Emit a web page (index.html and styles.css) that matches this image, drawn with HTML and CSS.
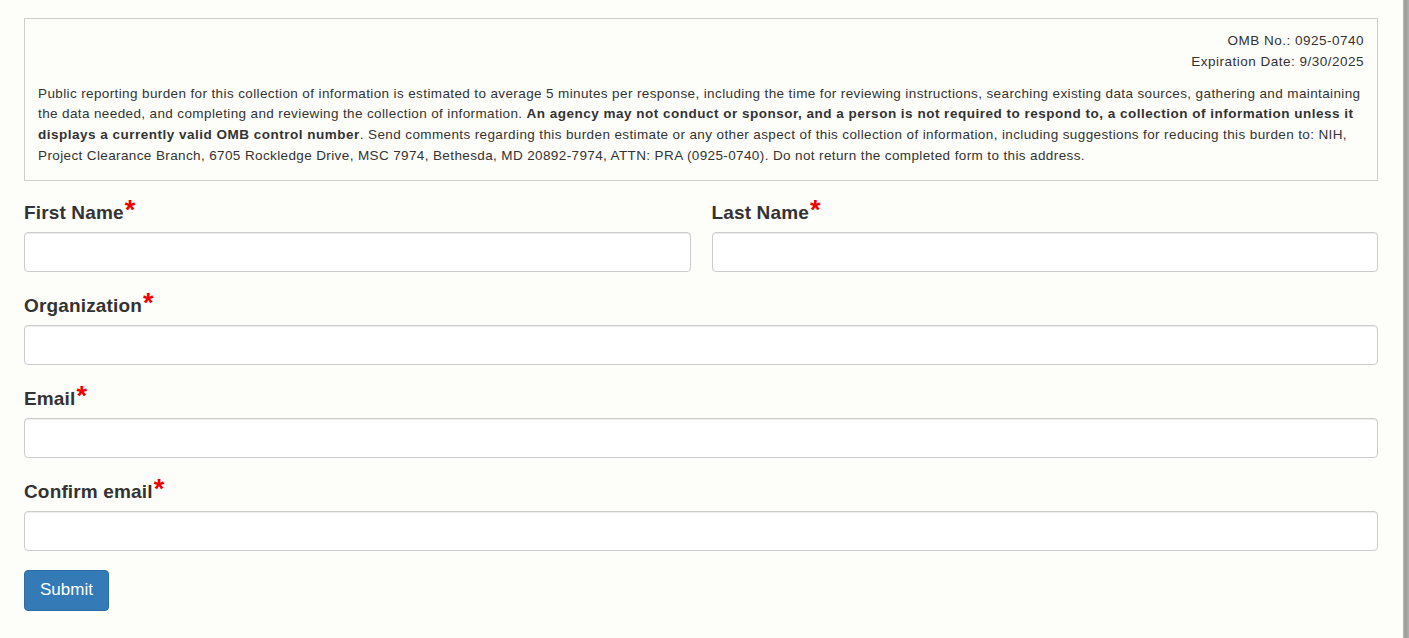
FILE: index.html
```html
<!DOCTYPE html>
<html lang="en">
<head>
<meta charset="utf-8">
<title>Registration</title>
<link rel="stylesheet" href="styles.css">
</head>
<body>
<div class="page">
  <main class="main">
    <p class="intro">Please register</p>
    <section class="burden">
      <div class="omb">
        <div>OMB No.: 0925-0740</div>
        <div>Expiration Date: 9/30/2025</div>
      </div>
      <p class="burden-text">Public reporting burden for this collection of information is estimated to average 5 minutes per response, including the time for reviewing instructions, searching existing data sources, gathering and maintaining the data needed, and completing and reviewing the collection of information. <strong>An agency may not conduct or sponsor, and a person is not required to respond to, a collection of information unless it displays a currently valid OMB control number</strong>. Send comments regarding this burden estimate or any other aspect of this collection of information, including suggestions for reducing this burden to: NIH, Project Clearance Branch, 6705 Rockledge Drive, MSC 7974, Bethesda, MD 20892-7974, ATTN: PRA (0925-0740). Do not return the completed form to this address.</p>
    </section>
    <form class="form">
      <div class="row">
        <div class="field">
          <label class="label" for="fn">First Name<span class="req">*</span></label>
          <input class="input" id="fn" type="text">
        </div>
        <div class="field">
          <label class="label" for="ln">Last Name<span class="req">*</span></label>
          <input class="input" id="ln" type="text">
        </div>
      </div>
      <div class="field">
        <label class="label" for="org">Organization<span class="req">*</span></label>
        <input class="input" id="org" type="text">
      </div>
      <div class="field">
        <label class="label" for="em">Email<span class="req">*</span></label>
        <input class="input" id="em" type="text">
      </div>
      <div class="field">
        <label class="label" for="cem">Confirm email<span class="req">*</span></label>
        <input class="input" id="cem" type="text">
      </div>
      <div class="actions">
        <button class="btn" type="button">Submit</button>
      </div>
    </form>
  </main>
  <div class="edge"></div>
</div>
</body>
</html>
```

FILE: styles.css
```css
html, body {
  margin: 0;
  padding: 0;
  height: 100%;
  overflow: hidden;
}
body {
  background: #fdfdf9;
  font-family: "Liberation Sans", Arial, sans-serif;
  color: #333;
}
.page {
  display: flex;
  height: 638px;
}
.main {
  flex: 1;
  padding: 0 25px 0 24px;
  margin-top: -17px;
}
.edge {
  width: 6px;
  background: linear-gradient(to right, #b8b8b6, #9c9c9a 40%, #b0b0ae);
}
.intro {
  margin: 0;
  font-size: 14px;
  line-height: 18px;
  height: 18px;
  padding-left: 1px;
}
.burden {
  margin-top: 17px;
  border: 1px solid #cfcfcb;
  padding: 12px 13px 13px 13px;
  font-size: 13.5px;
  letter-spacing: 0.38px;
  line-height: 20.8px;
}
.omb {
  text-align: right;
  letter-spacing: 0.5px;
}
.burden-text {
  margin: 11px 0 0 0;
}
.burden-text strong {
  font-weight: bold;
  letter-spacing: 0.5px;
}
.form {
  margin-top: 17px;
}
.row {
  display: flex;
  gap: 21px;
}
.row .field {
  flex: 1;
}
.field {
  display: flex;
  flex-direction: column;
  margin-bottom: 19px;
}
.label {
  font-size: 19px;
  font-weight: bold;
  line-height: 26px;
  letter-spacing: 0.15px;
  padding-top: 2px;
  margin-bottom: 6px;
  color: #333;
}
.req {
  color: #ee0000;
  font-size: 27px;
  line-height: 18px;
  font-weight: bold;
  margin-left: 1px;
}
.input {
  height: 40px;
  box-sizing: border-box;
  border: 1px solid #ccc;
  border-radius: 4px;
  background: #fff;
  box-shadow: inset 0 1px 1px rgba(0,0,0,0.075);
  margin: 0;
  font-size: 16px;
  padding: 6px 12px;
}
.actions {
  padding-top: 0;
}
.btn {
  background: #337ab7;
  border: 1px solid #2e6da4;
  color: #fff;
  font-family: "Liberation Sans", Arial, sans-serif;
  font-size: 17px;
  height: 41px;
  padding: 0 15px;
  border-radius: 4px;
}
```
